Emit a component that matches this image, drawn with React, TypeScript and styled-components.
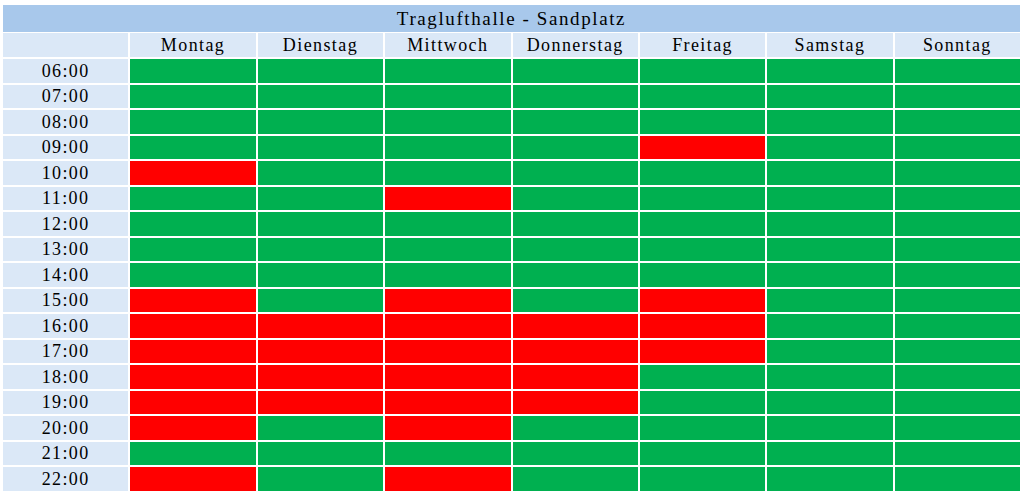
import React from "react";
import styled, { createGlobalStyle } from "styled-components";

const Global = createGlobalStyle`
  html, body { margin: 0; padding: 0; background: #ffffff; }
  body { font-family: "Liberation Serif", "Times New Roman", serif; color: #000; }
`;

const Page = styled.div`
  width: 1024px;
  height: 493px;
  box-sizing: border-box;
  padding: 5px 4px 0 3px;
  display: flex;
  flex-direction: column;
  gap: 1px;
`;

const Title = styled.div`
  height: 27px;
  background: #a8c8eb;
  display: flex;
  align-items: center;
  justify-content: center;
  font-size: 19px;
  letter-spacing: 1.6px;
  padding-top: 1px;
  box-sizing: border-box;
`;

const Grid = styled.div`
  display: grid;
  grid-template-columns: repeat(8, 1fr);
  grid-template-rows: 24px repeat(17, 23.5px);
  column-gap: 2px;
  row-gap: 2px;
`;

const Head = styled.div`
  background: #dbe8f7;
  display: flex;
  align-items: center;
  justify-content: center;
  font-size: 18px;
  letter-spacing: 1.4px;
  padding-top: 1px;
  box-sizing: border-box;
`;

const Time = styled(Head)``;

const Slot = styled.div<{ $busy: boolean }>`
  background: ${(p) => (p.$busy ? "#ff0000" : "#00b050")};
`;

const days = ["Montag", "Dienstag", "Mittwoch", "Donnerstag", "Freitag", "Samstag", "Sonntag"];

const busy: Record<string, number[]> = {
  "09:00": [4],
  "10:00": [0],
  "11:00": [2],
  "15:00": [0, 2, 4],
  "16:00": [0, 1, 2, 3, 4],
  "17:00": [0, 1, 2, 3, 4],
  "18:00": [0, 1, 2, 3],
  "19:00": [0, 1, 2, 3],
  "20:00": [0, 2],
  "22:00": [0, 2],
};

const hours = Array.from({ length: 17 }, (_, i) => `${String(i + 6).padStart(2, "0")}:00`);

export default function App() {
  return (
    <>
      <Global />
      <Page>
        <Title>Traglufthalle - Sandplatz</Title>
        <Grid>
          <Head />
          {days.map((d) => (
            <Head key={d}>{d}</Head>
          ))}
          {hours.map((h) => (
            <React.Fragment key={h}>
              <Time>{h}</Time>
              {days.map((d, i) => (
                <Slot key={d} $busy={(busy[h] || []).includes(i)} />
              ))}
            </React.Fragment>
          ))}
        </Grid>
      </Page>
    </>
  );
}
